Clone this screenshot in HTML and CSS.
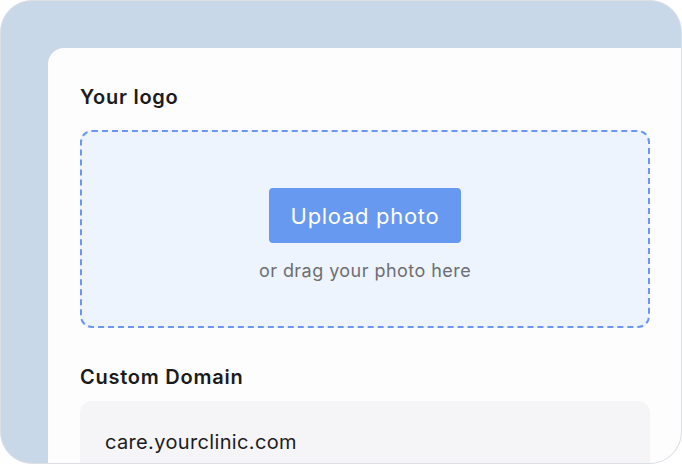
FILE: index.html
```html
<!DOCTYPE html>
<html>
<head>
<meta charset="utf-8">
<link rel="stylesheet" href="styles.css">
</head>
<body>
<div class="frame">
  <div class="card">
    <h2 class="label">Your logo</h2>
    <div class="dropzone">
      <button class="upload">Upload photo</button>
      <p class="hint">or drag your photo here</p>
    </div>
    <h2 class="label domain-label">Custom Domain</h2>
    <div class="input">care.yourclinic.com</div>
  </div>
</div>
</body>
</html>
```
FILE: styles.css
```css
html, body {
  margin: 0;
  padding: 0;
  background: #ffffff;
}
body {
  font-family: Inter, "Noto Sans", sans-serif;
  width: 682px;
  height: 464px;
  overflow: hidden;
}
.frame {
  box-sizing: border-box;
  width: 682px;
  height: 464px;
  border-radius: 32px;
  background: #c9d8e8;
  border: 1px solid #dcdfe4;
  overflow: hidden;
  padding: 47px 0 0 47px;
  display: flex;
}
.card {
  flex: 1;
  background: #fdfdfd;
  border-top-left-radius: 16px;
  padding: 37px 31px 0 32px;
}
.label {
  margin: 0;
  font-size: 20px;
  font-weight: 600;
  letter-spacing: 0.75px;
  color: #1b1b1d;
  line-height: 24px;
}
.dropzone {
  box-sizing: border-box;
  margin-top: 21px;
  height: 198px;
  border: 2px dashed #6b97f0;
  border-radius: 12px;
  background: #edf4fe;
  display: flex;
  flex-direction: column;
  align-items: center;
  padding-top: 56px;
}
.upload {
  width: 192px;
  height: 55px;
  border: none;
  border-radius: 4px;
  background: #6799f1;
  color: #ffffff;
  font-family: inherit;
  font-size: 22px;
  letter-spacing: 0.7px;
  font-weight: 400;
  padding: 0;
}
.hint {
  margin: 17px 0 0;
  font-size: 18px;
  letter-spacing: 0.45px;
  color: #6e6e73;
  line-height: 22px;
}
.domain-label {
  margin-top: 37px;
}
.input {
  margin-top: 12px;
  height: 80px;
  background: #f5f4f7;
  border-radius: 12px;
  padding: 29px 25px 0;
  box-sizing: border-box;
  font-size: 20px;
  letter-spacing: 0.35px;
  color: #1b1b1d;
  line-height: 24px;
}
```
